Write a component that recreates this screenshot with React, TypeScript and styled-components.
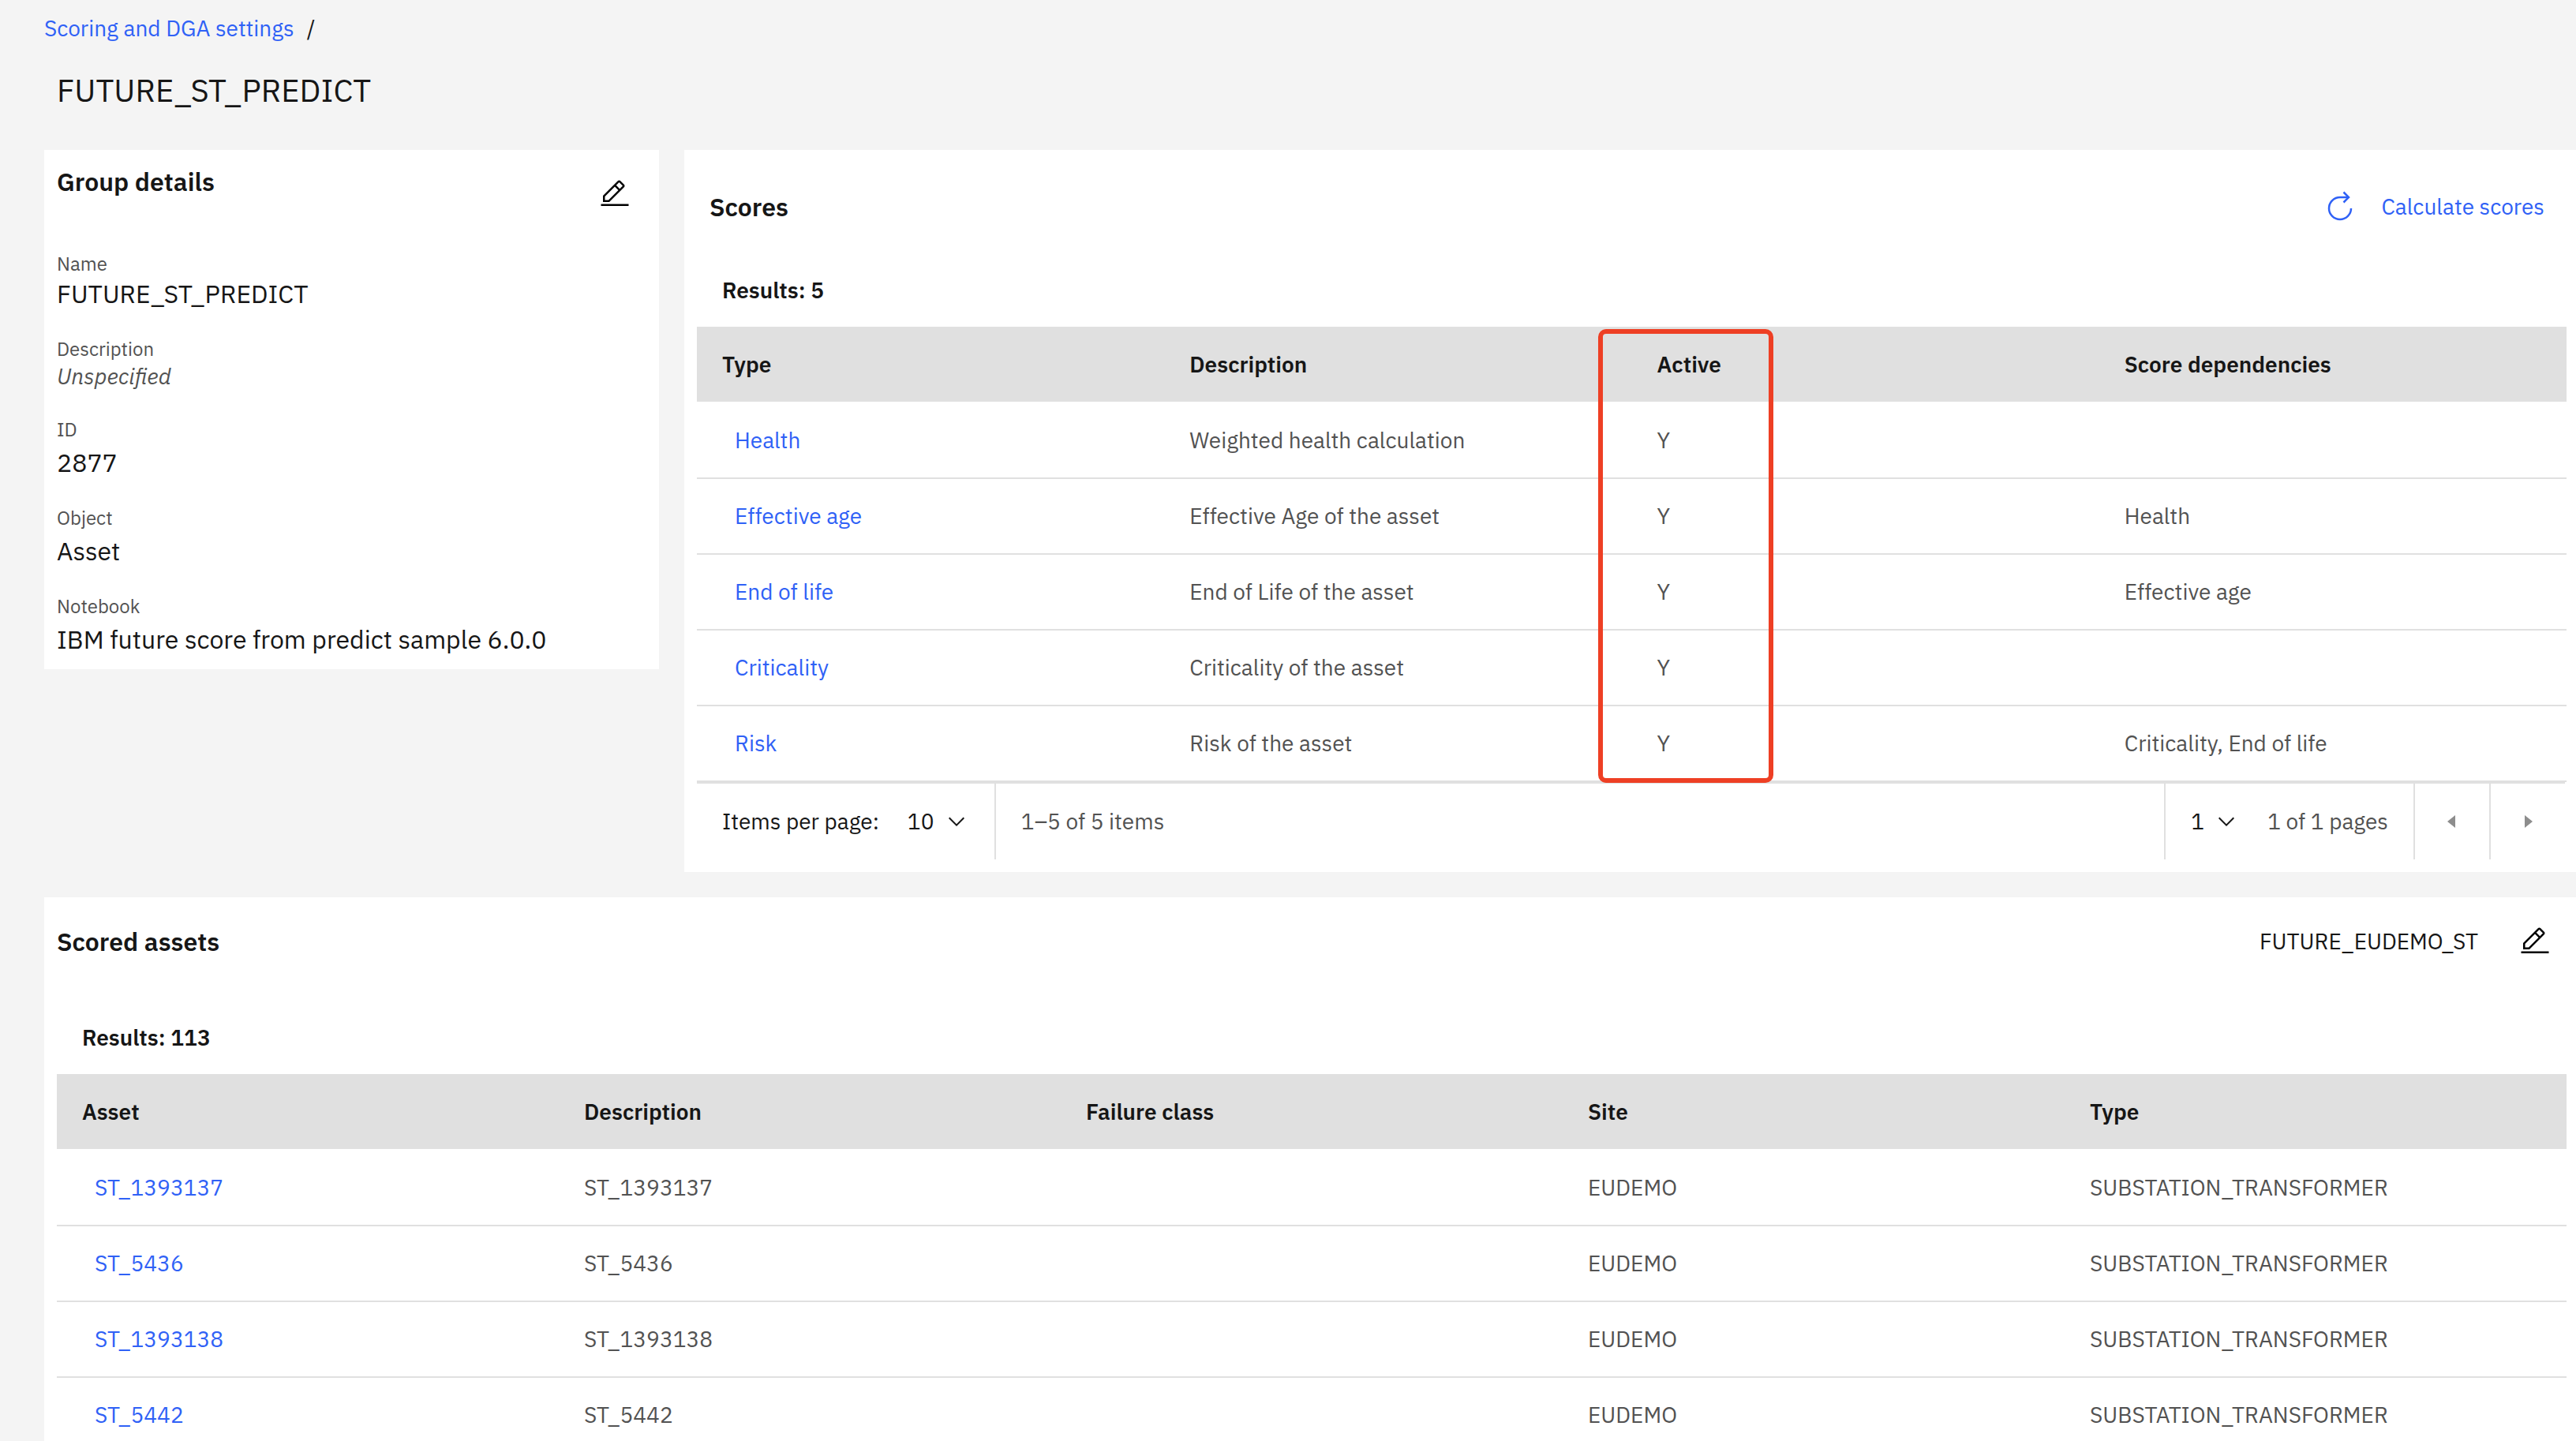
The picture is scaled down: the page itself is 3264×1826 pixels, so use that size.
import React from "react";
import styled, { createGlobalStyle } from "styled-components";

const color = {
  page: "#f4f4f4",
  layer: "#ffffff",
  header: "#e0e0e0",
  border: "#e0e0e0",
  text: "#161616",
  textSecondary: "#525252",
  link: "#2f61f6",
  disabled: "#8d8d8d",
  callout: "#ee3f24",
};

const GlobalStyle = createGlobalStyle`
  *, *::before, *::after { box-sizing: border-box; }
  html, body { margin: 0; background: ${color.page}; }
  body, button, select {
    font-family: "IBM Plex Sans", Roboto, "Liberation Sans", sans-serif;
    font-size: 28px;
    line-height: 36px;
    color: ${color.text};
  }
`;

const Page = styled.main`
  height: 100vh;
  overflow: auto;
  scrollbar-width: none;
  padding: 18px 0 0 56px;
`;

const Breadcrumb = styled.nav`
  display: flex;
  gap: 16px;
`;

const Link = styled.a`
  color: ${color.link};
  text-decoration: none;
  &:hover { text-decoration: underline; }
`;

const PageTitle = styled.h1`
  margin: 36px 0 0;
  padding: 0 16px;
  font-size: 40px;
  line-height: 48px;
  font-weight: 400;
`;

const Content = styled.div`
  display: grid;
  grid-template-columns: 779px minmax(0, 1fr);
  align-items: start;
  gap: 32px;
  margin-top: 52px;
`;

const Card = styled.section<{ $wide?: boolean }>`
  background: ${color.layer};
  grid-column: ${(p) => (p.$wide ? "1 / -1" : "auto")};
`;

const DetailsBody = styled.div`
  padding: 16px;
`;

const DetailsHead = styled.header`
  display: flex;
  align-items: flex-start;
  justify-content: space-between;
  padding-right: 20px;
  margin-bottom: 52px;
`;

const CardTitle = styled.h2`
  margin: 0;
  font-size: 32px;
  line-height: 48px;
  font-weight: 600;
`;

const IconButton = styled.button<{ $drop?: boolean }>`
  display: flex;
  margin-top: ${(p) => (p.$drop ? "20px" : "0")};
  padding: 0;
  border: 0;
  background: none;
  color: #000;
  cursor: pointer;
`;

const Fields = styled.dl`
  display: flex;
  flex-direction: column;
  gap: 32px;
  margin: 0;
`;

const Field = styled.div<{ $tight?: boolean }>`
  display: flex;
  flex-direction: column;
  gap: ${(p) => (p.$tight ? "0" : "4px")};
`;

const FieldLabel = styled.dt`
  font-size: 24px;
  line-height: 32px;
  color: ${color.textSecondary};
`;

const FieldValue = styled.dd<{ $empty?: boolean }>`
  margin: 0;
  font-size: ${(p) => (p.$empty ? "28px" : "32px")};
  line-height: ${(p) => (p.$empty ? "38px" : "44px")};
  font-style: ${(p) => (p.$empty ? "italic" : "normal")};
  color: ${(p) => (p.$empty ? color.textSecondary : color.text)};
`;

const ScoresHead = styled.header`
  display: flex;
  align-items: center;
  justify-content: space-between;
  padding: 48px 40px 64px 32px;
`;

const ActionButton = styled.button`
  display: flex;
  align-items: center;
  gap: 32px;
  padding: 0;
  border: 0;
  background: none;
  color: ${color.link};
  cursor: pointer;
`;

const AssetsHead = styled.header`
  display: flex;
  align-items: center;
  justify-content: space-between;
  padding: 32px 32px 80px 16px;
`;

const QueryName = styled.div`
  display: flex;
  align-items: center;
  gap: 52px;
`;

const TableArea = styled.div`
  padding: 0 12px 16px 16px;
`;

const Results = styled.p`
  margin: 0 0 28px;
  padding: 0 32px;
  font-weight: 600;
`;

const TableFrame = styled.div`
  position: relative;
`;

const Table = styled.table`
  width: 100%;
  table-layout: fixed;
  border-collapse: separate;
  border-spacing: 0;
`;

const HeadCell = styled.th`
  height: 97px;
  padding: 0 32px;
  border-bottom: 2px solid ${color.layer};
  background: ${color.header};
  text-align: left;
  font-weight: 600;
`;

const Cell = styled.td<{ $link?: boolean }>`
  height: 96px;
  padding: 0 32px 0 ${(p) => (p.$link ? "48px" : "32px")};
  border-bottom: 2px solid ${color.border};
  color: ${color.textSecondary};
`;

const Callout = styled.div`
  position: absolute;
  top: 3px;
  bottom: -1px;
  left: calc(50% - 43px);
  width: 222px;
  border: 6px solid ${color.callout};
  border-radius: 10px;
  pointer-events: none;
`;

const Pagination = styled.div`
  display: flex;
  justify-content: space-between;
  height: 98px;
  margin-right: 2px;
  border-top: 2px solid ${color.border};
`;

const PageGroup = styled.div`
  display: flex;
  align-items: center;
`;

const PageSegment = styled.div<{ $start?: boolean; $end?: boolean }>`
  display: flex;
  align-items: center;
  align-self: stretch;
  gap: 36px;
  padding: 0 32px;
  border-left: ${(p) => (p.$start ? `2px solid ${color.border}` : "0")};
  border-right: ${(p) => (p.$end ? `2px solid ${color.border}` : "0")};
`;

const SelectBox = styled.span`
  display: grid;
  align-items: center;
`;

const Select = styled.select`
  grid-area: 1 / 1;
  appearance: none;
  padding: 0 44px 0 0;
  border: 0;
  background: transparent;
  cursor: pointer;
`;

const SelectArrow = styled.svg`
  grid-area: 1 / 1;
  justify-self: end;
  pointer-events: none;
`;

const Muted = styled.span`
  color: ${color.textSecondary};
`;

const PageButton = styled.button`
  display: flex;
  align-items: center;
  justify-content: center;
  align-self: stretch;
  width: 96px;
  padding: 0;
  border: 0;
  border-left: 2px solid ${color.border};
  background: none;
  color: ${color.disabled};
`;

const EditIcon = () => (
  <svg width="40" height="40" viewBox="0 0 32 32" fill="currentColor" aria-hidden="true">
    <path d="M2 26H30V28H2zM25.4 9c.8-.8.8-2 0-2.8l-3.6-3.6c-.8-.8-2-.8-2.8 0l-15 15V24h6.4L25.4 9zM20.4 4L24 7.6l-3 3L17.4 7 20.4 4zM6 22v-3.6l10-10 3.6 3.6-10 10H6z" />
  </svg>
);

const RestartIcon = () => (
  <svg width="40" height="40" viewBox="0 0 40 40" fill="none" stroke="currentColor" strokeWidth="2.5" aria-hidden="true">
    <path d="M34 22A14 14 0 1 1 20 8H31" />
    <path d="M24.5 1.5L31 8L24.5 14.5" />
  </svg>
);

const Chevron = () => (
  <SelectArrow width="32" height="32" viewBox="0 0 16 16" fill="currentColor" aria-hidden="true">
    <path d="M8 11L3 6 3.7 5.3 8 9.6 12.3 5.3 13 6z" />
  </SelectArrow>
);

const Caret = ({ left }: { left?: boolean }) => (
  <svg width="32" height="32" viewBox="0 0 32 32" fill="currentColor" aria-hidden="true">
    <path d={left ? "M20 24L10 16 20 8z" : "M12 8L22 16 12 24z"} />
  </svg>
);

type TableProps = { label: string; columns: string[]; rows: string[][] };

const DataTable = ({ label, columns, rows }: TableProps) => (
  <Table aria-label={label}>
    <thead>
      <tr>
        {columns.map((c) => (
          <HeadCell key={c} scope="col">{c}</HeadCell>
        ))}
      </tr>
    </thead>
    <tbody>
      {rows.map((row) => (
        <tr key={row[0]}>
          {row.map((value, i) => (
            <Cell key={columns[i]} $link={i === 0}>
              {i === 0 ? <Link href="#">{value}</Link> : value}
            </Cell>
          ))}
        </tr>
      ))}
    </tbody>
  </Table>
);

const fields = [
  { label: "Name", value: "FUTURE_ST_PREDICT", tight: true },
  { label: "Description", value: "Unspecified", tight: true, empty: true },
  { label: "ID", value: "2877" },
  { label: "Object", value: "Asset" },
  { label: "Notebook", value: "IBM future score from predict sample 6.0.0" },
];

const scoreColumns = ["Type", "Description", "Active", "Score dependencies"];
const scores = [
  ["Health", "Weighted health calculation", "Y", ""],
  ["Effective age", "Effective Age of the asset", "Y", "Health"],
  ["End of life", "End of Life of the asset", "Y", "Effective age"],
  ["Criticality", "Criticality of the asset", "Y", ""],
  ["Risk", "Risk of the asset", "Y", "Criticality, End of life"],
];

const assetColumns = ["Asset", "Description", "Failure class", "Site", "Type"];
const assets = ["ST_1393137", "ST_5436", "ST_1393138", "ST_5442"].map((id) => [
  id, id, "", "EUDEMO", "SUBSTATION_TRANSFORMER",
]);

export default function App() {
  return (
    <>
      <GlobalStyle />
      <Page>
        <Breadcrumb aria-label="Breadcrumb">
          <Link href="#">Scoring and DGA settings</Link>
          <span>/</span>
        </Breadcrumb>
        <PageTitle>FUTURE_ST_PREDICT</PageTitle>

        <Content>
          <Card>
            <DetailsBody>
              <DetailsHead>
                <CardTitle>Group details</CardTitle>
                <IconButton $drop aria-label="Edit group details"><EditIcon /></IconButton>
              </DetailsHead>
              <Fields>
                {fields.map((f) => (
                  <Field key={f.label} $tight={f.tight}>
                    <FieldLabel>{f.label}</FieldLabel>
                    <FieldValue $empty={f.empty}>{f.value}</FieldValue>
                  </Field>
                ))}
              </Fields>
            </DetailsBody>
          </Card>

          <Card>
            <ScoresHead>
              <CardTitle>Scores</CardTitle>
              <ActionButton>
                <RestartIcon />
                Calculate scores
              </ActionButton>
            </ScoresHead>
            <TableArea>
              <Results>Results: 5</Results>
              <TableFrame>
                <DataTable label="Scores" columns={scoreColumns} rows={scores} />
                <Callout />
              </TableFrame>
              <Pagination>
                <PageGroup>
                  <PageSegment $end>
                    <label htmlFor="page-size">Items per page:</label>
                    <SelectBox>
                      <Select id="page-size" defaultValue="10">
                        <option>10</option>
                      </Select>
                      <Chevron />
                    </SelectBox>
                  </PageSegment>
                  <PageSegment>
                    <Muted>1–5 of 5 items</Muted>
                  </PageSegment>
                </PageGroup>
                <PageGroup>
                  <PageSegment $start>
                    <SelectBox>
                      <Select aria-label="Page number" defaultValue="1">
                        <option>1</option>
                      </Select>
                      <Chevron />
                    </SelectBox>
                    <Muted>1 of 1 pages</Muted>
                  </PageSegment>
                  <PageButton aria-label="Previous page" disabled><Caret left /></PageButton>
                  <PageButton aria-label="Next page" disabled><Caret /></PageButton>
                </PageGroup>
              </Pagination>
            </TableArea>
          </Card>

          <Card $wide>
            <AssetsHead>
              <CardTitle>Scored assets</CardTitle>
              <QueryName>
                <span>FUTURE_EUDEMO_ST</span>
                <IconButton aria-label="Edit scored assets"><EditIcon /></IconButton>
              </QueryName>
            </AssetsHead>
            <TableArea>
              <Results>Results: 113</Results>
              <DataTable label="Scored assets" columns={assetColumns} rows={assets} />
            </TableArea>
          </Card>
        </Content>
      </Page>
    </>
  );
}
